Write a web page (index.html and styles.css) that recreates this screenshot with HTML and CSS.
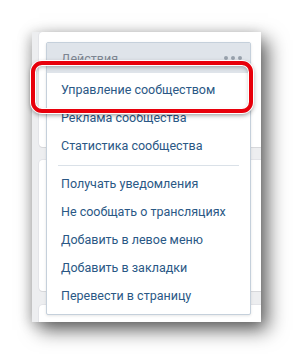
FILE: index.html
```html
<!DOCTYPE html>
<html lang="ru">
<head>
    <meta charset="UTF-8">
    <meta name="viewport" content="width=device-width, initial-scale=1.0">
    <title>Действия сообщества</title>
    <link rel="stylesheet" href="styles.css">
</head>
<body>
    <div class="shot">
        <div class="page">
            <div class="card card-top"></div>
            <div class="card card-mid"></div>
            <div class="card card-low"></div>
        </div>

        <div class="menu">
            <div class="menu-head">
                <span>Действия</span>
                <span class="dots"><i></i><i></i><i></i></span>
            </div>
            <div class="menu-list">
                <a class="item">Управление сообществом</a>
                <a class="item">Реклама сообщества</a>
                <a class="item">Статистика сообщества</a>
                <div class="sep"></div>
                <a class="item">Получать уведомления</a>
                <a class="item">Не сообщать о трансляциях</a>
                <a class="item">Добавить в левое меню</a>
                <a class="item">Добавить в закладки</a>
                <a class="item">Перевести в страницу</a>
            </div>
        </div>

        <!-- красная обводка поверх первого пункта -->
        <div class="mark"></div>
    </div>
</body>
</html>
```

FILE: styles.css
```css
body {
    margin: 0;
    padding: 32px;
    background: #fff;
    font-family: Roboto, "Noto Sans", sans-serif;
}
.shot {
    position: relative;
    width: 229px;
    height: 290px;
    background: #edeef0;
    box-shadow: 7px 8px 18px rgba(0,0,0,0.6), -3px 2px 12px rgba(0,0,0,0.18);
}
.page {
    height: 100%;
    overflow: hidden;
    display: flex;
    flex-direction: column;
    padding-left: 7px;
}
.card {
    background: #fff;
    border-radius: 4px 0 0 4px;
    box-shadow: 0 1px 0 0 #d7d8db, 0 0 0 1px #e3e4e8;
    flex-shrink: 0;
}
.card-top {
    height: 115px;
}
.card-mid {
    height: 131px;
    margin-top: 13px;
}
.card-low {
    height: 40px;
    margin-top: 14px;
}
.menu {
    position: absolute;
    left: 14px;
    top: 10px;
    width: 203px;
    background: #fff;
    border: 1px solid #c5d0db;
    border-radius: 2px;
    box-shadow: 0 1px 3px rgba(0,0,0,0.1);
}
.menu-head {
    height: 30px;
    display: flex;
    align-items: center;
    justify-content: space-between;
    padding: 0 8px 0 14px;
    background: #dfe4ea;
    color: #7d8591;
    font-size: 12.5px;
}
.dots {
    display: flex;
    gap: 3px;
}
.dots i {
    width: 4px;
    height: 4px;
    border-radius: 50%;
    background: #99a2ad;
}
.menu-list {
    padding: 3px 0 4px;
}
.item {
    display: block;
    height: 28px;
    line-height: 28px;
    padding: 0 14px;
    color: #2a5885;
    font-size: 12.5px;
    white-space: nowrap;
}
.sep {
    height: 1px;
    margin: 5px 11px 4px;
    background: #dae1e8;
}
.mark {
    position: absolute;
    left: -1px;
    top: 29px;
    width: 214px;
    height: 44px;
    border: 4px solid #e8000b;
    border-radius: 11px;
    box-shadow: inset 0 0 0 1px #fff, inset 0 2px 4px rgba(0,0,0,0.3), 0 0 0 1px #fff, 0 2px 5px rgba(0,0,0,0.45);
}
```
